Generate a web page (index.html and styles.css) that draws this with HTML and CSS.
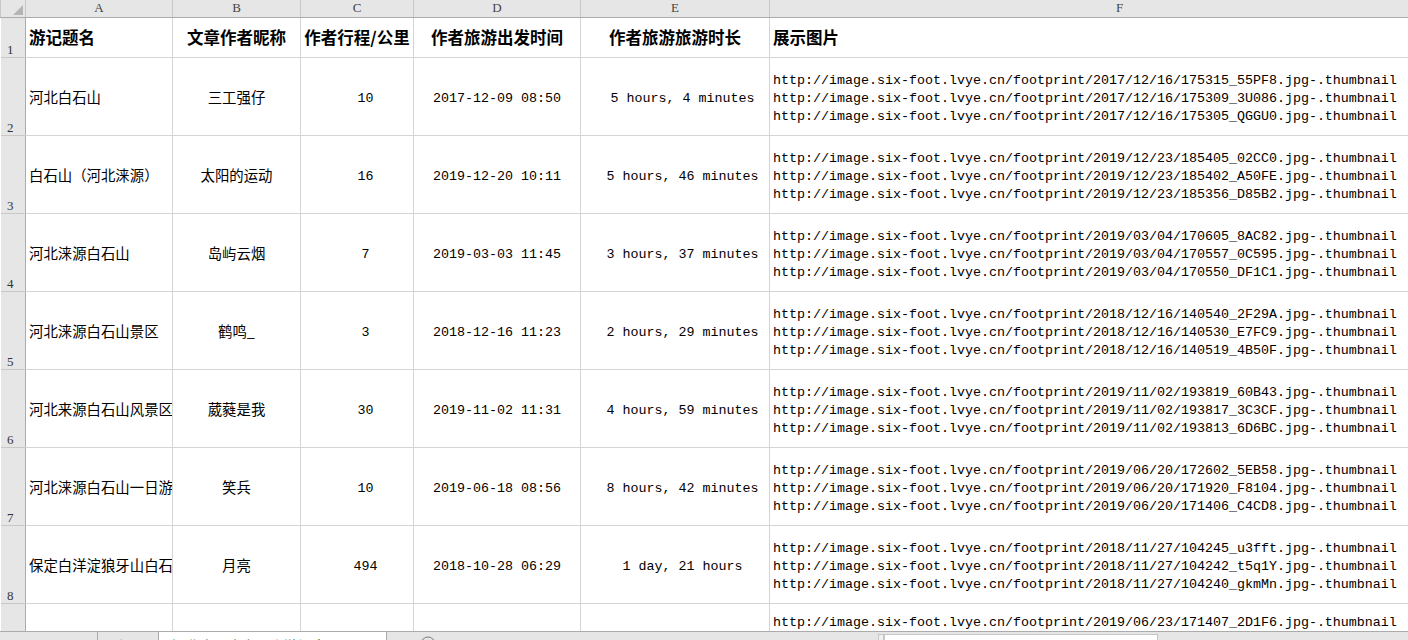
FILE: index.html
```html
<!DOCTYPE html>
<html>
<head>
    <title>白石山游记 - Sheet</title>
    <link rel="stylesheet" href="styles.css">
</head>
<body>
    <div class="sheet">
        <table class="grid">
            <colgroup>
                <col class="c-head">
                <col class="c-a">
                <col class="c-b">
                <col class="c-c">
                <col class="c-d">
                <col class="c-e">
                <col class="c-f">
            </colgroup>
            <tr class="letters">
                <th class="corner"><span class="tri"></span></th>
                <th>A</th><th>B</th><th>C</th><th>D</th><th>E</th><th>F</th>
            </tr>
            <tr class="title-row">
                <th class="rownum">1</th>
                <td class="bold">游记题名</td>
                <td class="bold mid">文章作者昵称</td>
                <td class="bold mid">作者行程/公里</td>
                <td class="bold mid">作者旅游出发时间</td>
                <td class="bold mid">作者旅游旅游时长</td>
                <td class="bold">展示图片</td>
            </tr>
            <tr class="data-row">
                <th class="rownum">2</th>
                <td class="cjk">河北白石山</td>
                <td class="cjk mid">三工强仔</td>
                <td class="mono mid num">10</td>
                <td class="mono mid">2017-12-09 08:50</td>
                <td class="mono mid dur">5 hours, 4 minutes</td>
                <td class="mono urls">http://image.six-foot.lvye.cn/footprint/2017/12/16/175315_55PF8.jpg-.thumbnail<br>http://image.six-foot.lvye.cn/footprint/2017/12/16/175309_3U086.jpg-.thumbnail<br>http://image.six-foot.lvye.cn/footprint/2017/12/16/175305_QGGU0.jpg-.thumbnail</td>
            </tr>
            <tr class="data-row">
                <th class="rownum">3</th>
                <td class="cjk">白石山（河北涞源）</td>
                <td class="cjk mid">太阳的运动</td>
                <td class="mono mid num">16</td>
                <td class="mono mid">2019-12-20 10:11</td>
                <td class="mono mid dur">5 hours, 46 minutes</td>
                <td class="mono urls">http://image.six-foot.lvye.cn/footprint/2019/12/23/185405_02CC0.jpg-.thumbnail<br>http://image.six-foot.lvye.cn/footprint/2019/12/23/185402_A50FE.jpg-.thumbnail<br>http://image.six-foot.lvye.cn/footprint/2019/12/23/185356_D85B2.jpg-.thumbnail</td>
            </tr>
            <tr class="data-row">
                <th class="rownum">4</th>
                <td class="cjk">河北涞源白石山</td>
                <td class="cjk mid">岛屿云烟</td>
                <td class="mono mid num">7</td>
                <td class="mono mid">2019-03-03 11:45</td>
                <td class="mono mid dur">3 hours, 37 minutes</td>
                <td class="mono urls">http://image.six-foot.lvye.cn/footprint/2019/03/04/170605_8AC82.jpg-.thumbnail<br>http://image.six-foot.lvye.cn/footprint/2019/03/04/170557_0C595.jpg-.thumbnail<br>http://image.six-foot.lvye.cn/footprint/2019/03/04/170550_DF1C1.jpg-.thumbnail</td>
            </tr>
            <tr class="data-row">
                <th class="rownum">5</th>
                <td class="cjk">河北涞源白石山景区</td>
                <td class="cjk mid">鹤鸣_</td>
                <td class="mono mid num">3</td>
                <td class="mono mid">2018-12-16 11:23</td>
                <td class="mono mid dur">2 hours, 29 minutes</td>
                <td class="mono urls">http://image.six-foot.lvye.cn/footprint/2018/12/16/140540_2F29A.jpg-.thumbnail<br>http://image.six-foot.lvye.cn/footprint/2018/12/16/140530_E7FC9.jpg-.thumbnail<br>http://image.six-foot.lvye.cn/footprint/2018/12/16/140519_4B50F.jpg-.thumbnail</td>
            </tr>
            <tr class="data-row">
                <th class="rownum">6</th>
                <td class="cjk">河北来源白石山风景区</td>
                <td class="cjk mid">葳蕤是我</td>
                <td class="mono mid num">30</td>
                <td class="mono mid">2019-11-02 11:31</td>
                <td class="mono mid dur">4 hours, 59 minutes</td>
                <td class="mono urls">http://image.six-foot.lvye.cn/footprint/2019/11/02/193819_60B43.jpg-.thumbnail<br>http://image.six-foot.lvye.cn/footprint/2019/11/02/193817_3C3CF.jpg-.thumbnail<br>http://image.six-foot.lvye.cn/footprint/2019/11/02/193813_6D6BC.jpg-.thumbnail</td>
            </tr>
            <tr class="data-row">
                <th class="rownum">7</th>
                <td class="cjk">河北涞源白石山一日游</td>
                <td class="cjk mid">笑兵</td>
                <td class="mono mid num">10</td>
                <td class="mono mid">2019-06-18 08:56</td>
                <td class="mono mid dur">8 hours, 42 minutes</td>
                <td class="mono urls">http://image.six-foot.lvye.cn/footprint/2019/06/20/172602_5EB58.jpg-.thumbnail<br>http://image.six-foot.lvye.cn/footprint/2019/06/20/171920_F8104.jpg-.thumbnail<br>http://image.six-foot.lvye.cn/footprint/2019/06/20/171406_C4CD8.jpg-.thumbnail</td>
            </tr>
            <tr class="data-row">
                <th class="rownum">8</th>
                <td class="cjk">保定白洋淀狼牙山白石山</td>
                <td class="cjk mid">月亮</td>
                <td class="mono mid num">494</td>
                <td class="mono mid">2018-10-28 06:29</td>
                <td class="mono mid dur">1 day, 21 hours</td>
                <td class="mono urls">http://image.six-foot.lvye.cn/footprint/2018/11/27/104245_u3fft.jpg-.thumbnail<br>http://image.six-foot.lvye.cn/footprint/2018/11/27/104242_t5q1Y.jpg-.thumbnail<br>http://image.six-foot.lvye.cn/footprint/2018/11/27/104240_gkmMn.jpg-.thumbnail</td>
            </tr>
            <tr class="data-row last-row">
                <th class="rownum"></th>
                <td></td>
                <td></td>
                <td></td>
                <td></td>
                <td></td>
                <td class="mono urls">http://image.six-foot.lvye.cn/footprint/2019/06/23/171407_2D1F6.jpg-.thumbnail</td>
            </tr>
        </table>
    </div>

    <!-- sheet tabs, mostly cut off by the window edge -->
    <div class="tabbar">
        <div class="tab-nav"></div>
        <div class="tab">Sheet1</div>
        <div class="tab active">河北白石山六只脚游记表页面 - 847</div>
        <div class="tab-add">
            <svg width="16" height="16" viewBox="0 0 16 16">
                <circle cx="8" cy="8" r="7" fill="none" stroke="#7a7a7a" stroke-width="1"/>
                <path d="M8 4.5v7M4.5 8h7" stroke="#7a7a7a" stroke-width="1"/>
            </svg>
        </div>
        <div class="scroll">
            <div class="scroll-btn"></div>
            <div class="scroll-thumb"></div>
        </div>
    </div>
</body>
</html>
```

FILE: styles.css
```css
html, body{
    margin: 0;
    height: 640px;
    overflow: hidden;
    background: #ffffff;
}
body{
    display: flex;
    flex-direction: column;
}
.sheet{
    flex: 0 0 631px;
    overflow: hidden;
}

.grid{
    border-collapse: collapse;
    table-layout: fixed;
    width: 1469px;
    font-family: "Noto Sans CJK SC", sans-serif;
    color: #000;
}
.c-head{ width: 25px; }
.c-a{ width: 147px; }
.c-b{ width: 128px; }
.c-c{ width: 113px; }
.c-d{ width: 167px; }
.c-e{ width: 189px; }
.c-f{ width: 700px; }

.grid td, .grid th{
    border: 1px solid #d4d4d4;
    padding: 0 3px;
    white-space: nowrap;
    overflow: hidden;
    box-sizing: border-box;
}

/* column letters */
.grid .letters th{
    height: 17px;
    background: #e6e6e6;
    border-color: #c8c8c8;
    border-bottom-color: #ababab;
    border-top: none;
    font-family: "Liberation Serif", serif;
    font-weight: normal;
    font-size: 13px;
    color: #444;
    line-height: 14px;
    text-align: center;
}
.corner{
    position: relative;
}
.tri{
    position: absolute;
    right: 2px;
    bottom: 2px;
    width: 0;
    height: 0;
    border-left: 10px solid transparent;
    border-bottom: 10px solid #b4b4b4;
}

/* row numbers */
.grid .rownum{
    background: #e6e6e6;
    border-color: #c8c8c8;
    border-right-color: #ababab;
    border-left: none;
    font-family: "Liberation Serif", serif;
    font-weight: normal;
    font-size: 13px;
    color: #333;
    vertical-align: bottom;
    text-align: center;
    padding: 0 5px 0 0;
    line-height: 15px;
}

.title-row td, .title-row th{ height: 40px; }
.data-row td, .data-row th{ height: 78px; }

.bold{
    font-weight: bold;
    font-size: 16.5px;
    vertical-align: middle;
}
.cjk{
    font-size: 14.4px;
    vertical-align: middle;
}
.grid .mono{
    font-family: "Liberation Mono", "Noto Sans CJK SC", monospace;
    font-size: 13.33px;
    vertical-align: middle;
    padding-top: 5px;
}
.mid{ text-align: center; }
.grid .num{ padding-left: 20px; }
.grid .dur{ padding-left: 18px; }
.urls{
    line-height: 18px;
    text-align: left;
}
.grid .last-row .urls{
    vertical-align: top;
    padding-top: 10px;
}

/* bottom tab strip */
.tabbar{
    flex: 0 0 25px;
    display: flex;
    background: #e6e6e6;
    border-top: 1px solid #ababab;
    font-family: "Noto Sans CJK SC", sans-serif;
    font-size: 14px;
    color: #444;
}
.tab-nav{
    flex: 0 0 97px;
}
.tab{
    flex: 0 0 auto;
    box-sizing: border-box;
    overflow: hidden;
    white-space: nowrap;
    padding: 3px 0 0 13px;
    border-left: 1px solid #ababab;
    line-height: 20px;
    width: 61px;
}
.tab.active{
    background: #ffffff;
    color: #217346;
    border-right: 1px solid #ababab;
    width: 229px;
}
.tab-add{
    flex: 0 0 491px;
    box-sizing: border-box;
    padding: 4px 0 0 33px;
}
.scroll{
    flex: 1;
    display: flex;
    padding-top: 2px;
}
.scroll-btn{
    width: 4px;
    height: 20px;
    border: 1px solid #c6c6c6;
    background: #f0f0f0;
}
.scroll-thumb{
    width: 272px;
    height: 20px;
    border: 1px solid #c6c6c6;
    background: #ffffff;
}
```
